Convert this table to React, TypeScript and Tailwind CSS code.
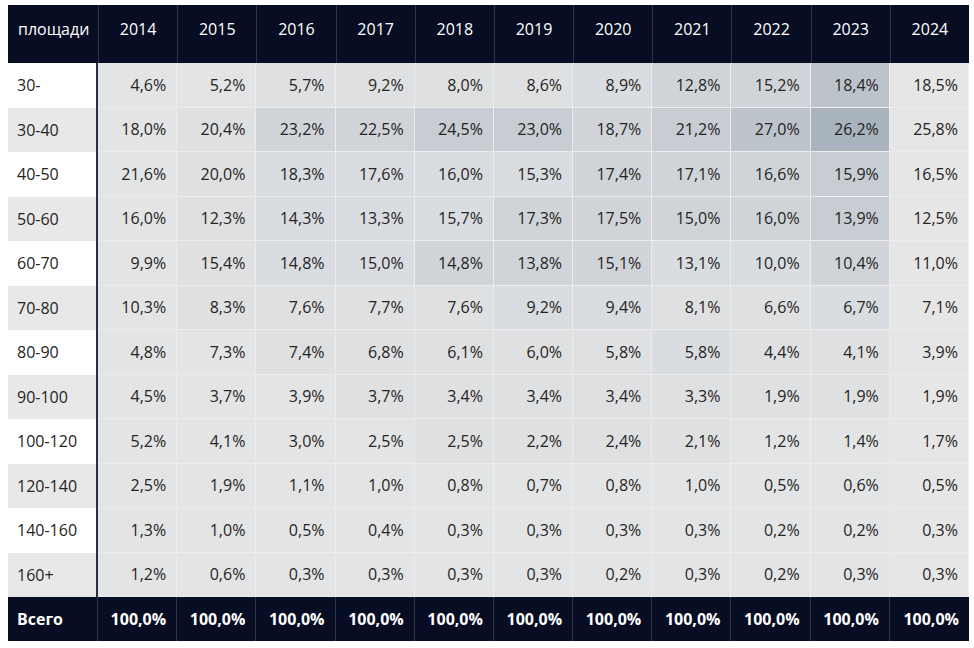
const years = ["2014", "2015", "2016", "2017", "2018", "2019", "2020", "2021", "2022", "2023", "2024"];

const rows: { label: string; values: string[]; shade: number[] }[] = [
  { label: "30-", values: ["4,6%", "5,2%", "5,7%", "9,2%", "8,0%", "8,6%", "8,9%", "12,8%", "15,2%", "18,4%", "18,5%"], shade: [0, 0, 1, 1, 1, 1, 2, 3, 3, 5, 7] },
  { label: "30-40", values: ["18,0%", "20,4%", "23,2%", "22,5%", "24,5%", "23,0%", "18,7%", "21,2%", "27,0%", "26,2%", "25,8%"], shade: [0, 1, 3, 3, 4, 4, 3, 4, 5, 6, 7] },
  { label: "40-50", values: ["21,6%", "20,0%", "18,3%", "17,6%", "16,0%", "15,3%", "17,4%", "17,1%", "16,6%", "15,9%", "16,5%"], shade: [0, 1, 2, 2, 2, 2, 3, 3, 3, 4, 7] },
  { label: "50-60", values: ["16,0%", "12,3%", "14,3%", "13,3%", "15,7%", "17,3%", "17,5%", "15,0%", "16,0%", "13,9%", "12,5%"], shade: [0, 1, 2, 2, 2, 3, 3, 3, 3, 4, 7] },
  { label: "60-70", values: ["9,9%", "15,4%", "14,8%", "15,0%", "14,8%", "13,8%", "15,1%", "13,1%", "10,0%", "10,4%", "11,0%"], shade: [0, 1, 2, 2, 3, 3, 3, 2, 2, 3, 7] },
  { label: "70-80", values: ["10,3%", "8,3%", "7,6%", "7,7%", "7,6%", "9,2%", "9,4%", "8,1%", "6,6%", "6,7%", "7,1%"], shade: [0, 1, 1, 1, 1, 2, 2, 1, 1, 2, 7] },
  { label: "80-90", values: ["4,8%", "7,3%", "7,4%", "6,8%", "6,1%", "6,0%", "5,8%", "5,8%", "4,4%", "4,1%", "3,9%"], shade: [0, 0, 1, 1, 1, 1, 1, 2, 1, 1, 7] },
  { label: "90-100", values: ["4,5%", "3,7%", "3,9%", "3,7%", "3,4%", "3,4%", "3,4%", "3,3%", "1,9%", "1,9%", "1,9%"], shade: [0, 0, 0, 1, 1, 1, 1, 1, 1, 1, 7] },
  { label: "100-120", values: ["5,2%", "4,1%", "3,0%", "2,5%", "2,5%", "2,2%", "2,4%", "2,1%", "1,2%", "1,4%", "1,7%"], shade: [0, 0, 0, 0, 1, 1, 1, 1, 0, 0, 7] },
  { label: "120-140", values: ["2,5%", "1,9%", "1,1%", "1,0%", "0,8%", "0,7%", "0,8%", "1,0%", "0,5%", "0,6%", "0,5%"], shade: [0, 0, 0, 0, 0, 0, 0, 0, 0, 0, 7] },
  { label: "140-160", values: ["1,3%", "1,0%", "0,5%", "0,4%", "0,3%", "0,3%", "0,3%", "0,3%", "0,2%", "0,2%", "0,3%"], shade: [0, 0, 0, 0, 0, 0, 0, 0, 0, 0, 7] },
  { label: "160+", values: ["1,2%", "0,6%", "0,3%", "0,3%", "0,3%", "0,3%", "0,2%", "0,3%", "0,2%", "0,3%", "0,3%"], shade: [0, 0, 0, 0, 0, 0, 0, 0, 0, 0, 7] },
];

// heatmap steps, light to dark; 7 = plain last column
const shades = [
  "bg-[#e3e4e5]",
  "bg-[#dfe0e2]",
  "bg-[#d9dce0]",
  "bg-[#d0d4d9]",
  "bg-[#c7cdd3]",
  "bg-[#bcc3cb]",
  "bg-[#a9b3bd]",
  "bg-[#e6e6e6]",
];

export default function App() {
  return (
    <div className="w-[974px] h-[648px] bg-white pl-[8px] pt-[5px] font-['Open_Sans','Noto_Sans',sans-serif] text-[16px]">
      <div className="w-[961px]">
        {/* header */}
        <div className="grid grid-cols-[90px_repeat(11,1fr)] h-[58px] bg-[#070d22] text-white">
          <div className="flex items-center pl-[10px] pb-[11px]">площади</div>
          {years.map((y) => (
            <div key={y} className="flex items-center justify-center pb-[11px] border-l border-[#2f3547]">
              {y}
            </div>
          ))}
        </div>

        {rows.map((row, i) => (
          <div key={row.label} className="grid grid-cols-[90px_repeat(11,1fr)] h-[44.5px] text-[#252423]">
            <div
              className={`flex items-center pl-[9px] border-r-2 border-[#2b3044] ${i % 2 === 1 ? "bg-[#e8e8e8]" : "bg-white"}`}
            >
              {row.label}
            </div>
            {row.values.map((v, j) => (
              <div
                key={j}
                className={`flex items-center justify-end pr-[10px] border-r border-b border-[#ececec] ${shades[row.shade[j]]}`}
              >
                {v}
              </div>
            ))}
          </div>
        ))}

        {/* total */}
        <div className="grid grid-cols-[90px_repeat(11,1fr)] h-[44px] bg-[#070d22] text-white font-bold">
          <div className="flex items-center pl-[9px] border-r border-[#2f3547]">Всего</div>
          {years.map((y) => (
            <div key={y} className="flex items-center justify-end pr-[10px] border-r border-[#2f3547] last:border-r-0">
              100,0%
            </div>
          ))}
        </div>
      </div>
    </div>
  );
}
